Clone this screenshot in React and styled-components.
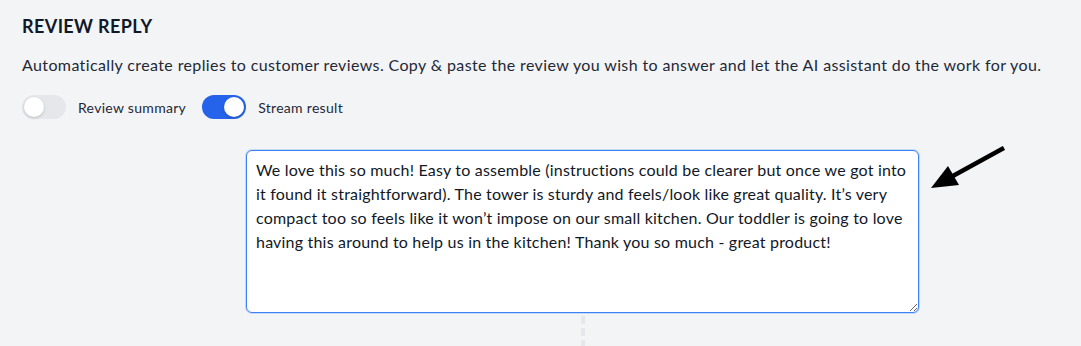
import React, { useState } from "react";
import styled, { createGlobalStyle } from "styled-components";

const GlobalStyle = createGlobalStyle`
  html, body {
    margin: 0;
    padding: 0;
    background: #f3f4f6;
  }
  body {
    font-family: "Lato", "Open Sans", sans-serif;
    color: #111827;
  }
`;

const Page = styled.div`
  width: 1081px;
  height: 346px;
  overflow: hidden;
  box-sizing: border-box;
  padding: 15px 22px 0;
  display: flex;
  flex-direction: column;
`;

const Heading = styled.h2`
  margin: 0;
  font-size: 18px;
  line-height: 22px;
  font-weight: 700;
  letter-spacing: 0.4px;
  color: #111827;
`;

const Description = styled.p`
  margin: 17px 0 0;
  font-size: 16px;
  line-height: 22px;
  letter-spacing: 0.38px;
  color: #1f2937;
`;

const ToggleRow = styled.div`
  display: flex;
  align-items: center;
  gap: 12px;
  margin-top: 19px;
`;

const ToggleItem = styled.label`
  display: flex;
  align-items: center;
  gap: 12px;
  font-size: 14px;
  letter-spacing: 0.3px;
  color: #1f2937;
  cursor: pointer;
  margin-right: 4px;
`;

const Track = styled.span`
  position: relative;
  width: 44px;
  height: 24px;
  border-radius: 12px;
  background: ${(p) => (p.$on ? "#2563eb" : "#e5e7eb")};
  flex-shrink: 0;
`;

const Knob = styled.span`
  position: absolute;
  top: 2px;
  left: ${(p) => (p.$on ? "22px" : "2px")};
  width: 20px;
  height: 20px;
  border-radius: 50%;
  background: #fff;
  box-shadow: 0 1px 3px rgba(0, 0, 0, 0.18);
`;

const Workspace = styled.div`
  display: flex;
  align-items: flex-start;
  margin-top: 31px;
  padding-left: 224px;
`;

const Column = styled.div`
  display: flex;
  flex-direction: column;
  align-items: center;
`;

const ReviewBox = styled.textarea`
  width: 673px;
  height: 163px;
  box-sizing: border-box;
  padding: 7px 3px 8px 9px;
  border: 1px solid #3b82f6;
  border-radius: 6px;
  box-shadow: 0 0 0 1px rgba(59, 130, 246, 0.25);
  background: #fff;
  font-family: "Lato", "Open Sans", sans-serif;
  font-size: 16px;
  line-height: 24px;
  letter-spacing: 0.2px;
  color: #111827;
  outline: none;
  resize: both;
`;

const Connector = styled.div`
  width: 4px;
  height: 40px;
  margin-top: 3px;
  background: repeating-linear-gradient(
    to bottom,
    #e5e7eb 0,
    #e5e7eb 8px,
    transparent 8px,
    transparent 12px
  );
`;

const Pointer = styled.svg`
  margin-left: 6px;
  margin-top: -4px;
  flex-shrink: 0;
`;

function Toggle({ label, on, onChange }) {
  return (
    <ToggleItem onClick={onChange}>
      <Track $on={on}>
        <Knob $on={on} />
      </Track>
      {label}
    </ToggleItem>
  );
}

const review =
  "We love this so much! Easy to assemble (instructions could be clearer but once we got into it found it straightforward). The tower is sturdy and feels/look like great quality. It\u2019s very compact too so feels like it won\u2019t impose on our small kitchen. Our toddler is going to love having this around to help us in the kitchen! Thank you so much - great product!";

export default function App() {
  const [summary, setSummary] = useState(false);
  const [stream, setStream] = useState(true);

  return (
    <>
      <GlobalStyle />
      <Page>
        <Heading>REVIEW REPLY</Heading>
        <Description>
          Automatically create replies to customer reviews. Copy &amp; paste the
          review you wish to answer and let the AI assistant do the work for you.
        </Description>
        <ToggleRow>
          <Toggle
            label="Review summary"
            on={summary}
            onChange={() => setSummary(!summary)}
          />
          <Toggle
            label="Stream result"
            on={stream}
            onChange={() => setStream(!stream)}
          />
        </ToggleRow>
        <Workspace>
          <Column>
            <ReviewBox defaultValue={review} />
            <Connector />
          </Column>
          <Pointer width="80" height="50" viewBox="0 0 80 50">
            <line x1="77" y1="3" x2="28" y2="30" stroke="#000" strokeWidth="4.5" strokeLinecap="square" />
            <polygon points="6,42 23,20 34,39" fill="#000" />
          </Pointer>
        </Workspace>
      </Page>
    </>
  );
}
